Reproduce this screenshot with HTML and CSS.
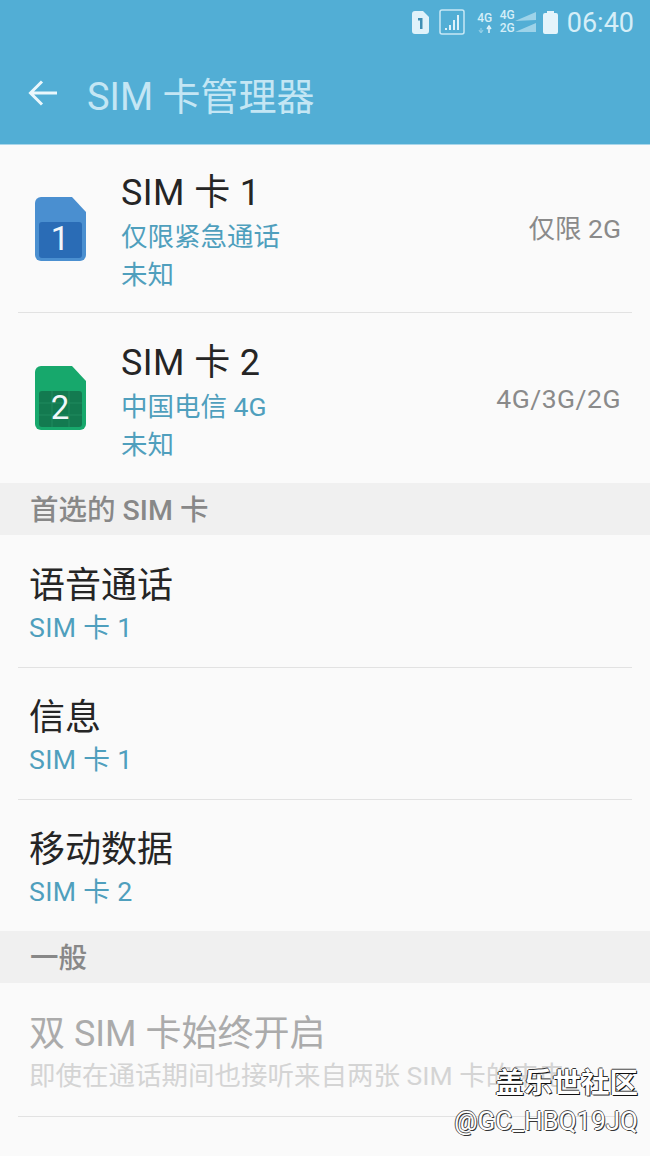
FILE: index.html
```html
<!DOCTYPE html>
<html lang="zh-CN">
<head>
    <meta charset="UTF-8">
    <meta name="viewport" content="width=device-width, initial-scale=1.0">
    <title>SIM 卡管理器</title>
    <link rel="stylesheet" href="styles.css">
</head>
<body>
    <div class="phone">
        <header class="appbar">
            <div class="statusbar">
                <svg class="st-sim" width="17" height="23" viewBox="0 0 17 23">
                    <path d="M3 0h8l6 6v14a3 3 0 0 1-3 3H3a3 3 0 0 1-3-3V3a3 3 0 0 1 3-3z" fill="#dff2fa"/>
                    <path d="M6 7h4.500v11H8V9.500H6z" fill="#3f8fb4"/>
                </svg>
                <svg class="st-signal" width="26" height="26" viewBox="0 0 26 26">
                    <rect x="1" y="1" width="24" height="24" rx="2" fill="none" stroke="#c8e8f5" stroke-width="1.500"/>
                    <path d="M6 19h2v2H6zM10 16h2v5h-2zM14 11h2v10h-2zM18 6h2v15h-2z" fill="#dff2fa"/>
                </svg>
                <div class="st-net">
                    <span>4G</span>
                    <svg width="14" height="8" viewBox="0 0 14 8">
                        <path d="M3 8V3M1 5l2 3 2-3" fill="none" stroke="#8fcde6" stroke-width="1.200"/>
                        <path d="M11 8V3M9 4l2-3 2 3" fill="none" stroke="#dff2fa" stroke-width="1.500"/>
                    </svg>
                </div>
                <div class="st-dual">
                    <div class="st-dual-labels">
                        <span>4G</span>
                        <span>2G</span>
                    </div>
                    <svg width="21" height="22" viewBox="0 0 21 22">
                        <path d="M0 10L21 1v8L0 10zM0 21l21-9v9z" fill="#9dd3e9"/>
                    </svg>
                </div>
                <svg class="st-batt" width="15" height="23" viewBox="0 0 15 23">
                    <path d="M4 0h7v2h2a2 2 0 0 1 2 2v17a2 2 0 0 1-2 2H2a2 2 0 0 1-2-2V4a2 2 0 0 1 2-2h2z" fill="#e4f4fb"/>
                </svg>
                <span class="st-time">06:40</span>
            </div>
            <div class="toolbar">
                <svg class="back" width="30" height="28" viewBox="0 0 30 28">
                    <path d="M29 14H3M14 2.500L2.500 14 14 25.500" fill="none" stroke="#eaf7fc" stroke-width="3"/>
                </svg>
                <h1>SIM 卡管理器</h1>
            </div>
        </header>

        <main>
            <section class="cards">
                <div class="card">
                    <svg class="sim-icon" width="51" height="64" viewBox="0 0 51 64">
                        <path d="M6 0h31l14 15v43a6 6 0 0 1-6 6H6a6 6 0 0 1-6-6V6a6 6 0 0 1 6-6z" fill="#4a8fd0"/>
                        <rect x="4" y="25" width="43" height="36" rx="3" fill="#2a6cb6"/>
                        <text x="25" y="53" text-anchor="middle" class="sim-num">1</text>
                    </svg>
                    <div class="card-text">
                        <div class="name">SIM 卡 1</div>
                        <div class="sub">仅限紧急通话</div>
                        <div class="sub">未知</div>
                    </div>
                    <div class="mode">仅限 2G</div>
                </div>
                <div class="card card-last">
                    <svg class="sim-icon" width="51" height="64" viewBox="0 0 51 64">
                        <path d="M6 0h31l14 15v43a6 6 0 0 1-6 6H6a6 6 0 0 1-6-6V6a6 6 0 0 1 6-6z" fill="#17a86c"/>
                        <rect x="4" y="25" width="43" height="36" rx="3" fill="#137a50"/>
                        <path d="M4 37h43M4 49h43M17 25v36M34 25v36" stroke="#218a5f" stroke-width="1"/>
                        <text x="25" y="53" text-anchor="middle" class="sim-num">2</text>
                    </svg>
                    <div class="card-text">
                        <div class="name">SIM 卡 2</div>
                        <div class="sub">中国电信 4G</div>
                        <div class="sub">未知</div>
                    </div>
                    <div class="mode">4G/3G/2G</div>
                </div>
            </section>

            <div class="section-head">首选的 SIM 卡</div>

            <section>
                <div class="row row-first">
                    <div class="label">语音通话</div>
                    <div class="value">SIM 卡 1</div>
                </div>
                <div class="row">
                    <div class="label">信息</div>
                    <div class="value">SIM 卡 1</div>
                </div>
                <div class="row row-last">
                    <div class="label">移动数据</div>
                    <div class="value">SIM 卡 2</div>
                </div>
            </section>

            <div class="section-head">一般</div>

            <section>
                <div class="row row-first disabled">
                    <div class="label">双 SIM 卡始终开启</div>
                    <div class="value">即使在通话期间也接听来自两张 SIM 卡的来电。</div>
                </div>
            </section>
        </main>

        <div class="watermark">
            <div class="wm-name">盖乐世社区</div>
            <div class="wm-id">@GC_HBQ19JQ</div>
        </div>
    </div>
</body>
</html>
```

FILE: styles.css
```css
* {
    box-sizing: border-box;
}

body {
    margin: 0;
    background: #fafafa;
    font-family: Roboto, "Noto Sans CJK SC", sans-serif;
}

.phone {
    position: relative;
    width: 650px;
    height: 1156px;
    overflow: hidden;
    background: #fafafa;
}

.appbar {
    height: 145px;
    background: #52aed5;
    border-bottom: 1px solid #a9d6ea;
}

.statusbar {
    height: 44px;
    display: flex;
    justify-content: flex-end;
    align-items: center;
    padding-right: 16px;
    color: #d5eef8;
}

.st-sim {
    margin-right: 10px;
}

.st-signal {
    margin-right: 11px;
}

.st-net {
    width: 18px;
    display: flex;
    flex-direction: column;
    align-items: center;
    font-size: 12px;
    font-weight: 500;
    line-height: 13px;
    margin-right: 6px;
}

.st-dual {
    display: flex;
    align-items: center;
    margin-right: 7px;
}

.st-dual-labels {
    display: flex;
    flex-direction: column;
    font-size: 12px;
    font-weight: 500;
    line-height: 13px;
}

.st-batt {
    margin-right: 9px;
}

.st-time {
    font-size: 27px;
    line-height: 44px;
    margin-top: 1px;
    color: #d5eef8;
}

.toolbar {
    height: 100px;
    display: flex;
    align-items: center;
    padding-left: 28px;
    padding-bottom: 2px;
}

.back {
    margin-right: 29px;
}

h1 {
    margin: 0;
    font-size: 38px;
    font-weight: 400;
    color: #c4e6f4;
}

.card {
    height: 168px;
    margin: 0 18px;
    padding: 0 11px 0 17px;
    display: flex;
    align-items: center;
    border-bottom: 1px solid #e2e2e2;
}

.card-last {
    height: 170px;
    border-bottom: none;
}

.sim-icon {
    flex: none;
    margin-right: 36px;
}

.sim-num {
    font-family: Roboto, sans-serif;
    font-size: 33px;
    fill: #f2f7fb;
}

.card-text {
    flex: 1;
    padding-top: 7px;
}

.name {
    font-size: 36px;
    line-height: 46px;
    letter-spacing: 0.4px;
    color: #252525;
    margin-left: -1px;
    margin-bottom: 2px;
}

.sub {
    font-size: 26.500px;
    line-height: 38px;
    color: #4f9fbd;
    margin-left: -1px;
}

.mode {
    font-size: 26.500px;
    color: #8a8a8a;
    margin-top: -4px;
}

.card-last .mode {
    margin-top: 0;
    letter-spacing: 0.5px;
}

.section-head {
    height: 52px;
    padding-left: 30px;
    padding-bottom: 3px;
    display: flex;
    align-items: center;
    background: #f0f0f0;
    font-size: 28.500px;
    font-weight: 500;
    color: #888;
}

.row {
    height: 132px;
    margin: 0 18px;
    padding: 27px 11px 0;
    border-bottom: 1px solid #e2e2e2;
}

.row-first {
    height: 133px;
    padding-top: 28px;
}

.row-last {
    height: 131px;
    border-bottom: none;
}

.label {
    font-size: 36px;
    line-height: 46px;
    color: #252525;
}

.value {
    font-size: 26.700px;
    line-height: 38px;
    letter-spacing: 0.3px;
    color: #4f9fbd;
    white-space: nowrap;
}

.disabled {
    height: 134px;
}

.disabled .label {
    color: #ababab;
}

.disabled .value {
    font-size: 26.500px;
    letter-spacing: 0;
    color: #d4d4d4;
}

.watermark {
    position: absolute;
    right: 12px;
    top: 1066px;
    text-align: right;
}

.wm-name {
    font-size: 28.500px;
    font-weight: 700;
    line-height: 36px;
    color: #fff;
    text-shadow: 1px 1px 0 #111, -1px 0 0 #333, 0 -1px 0 #333;
}

.wm-id {
    font-size: 26px;
    line-height: 38px;
    color: #fff;
    text-shadow: 1px 1px 0 #333, -1px 0 0 #555, 0 -1px 0 #555;
}
```
